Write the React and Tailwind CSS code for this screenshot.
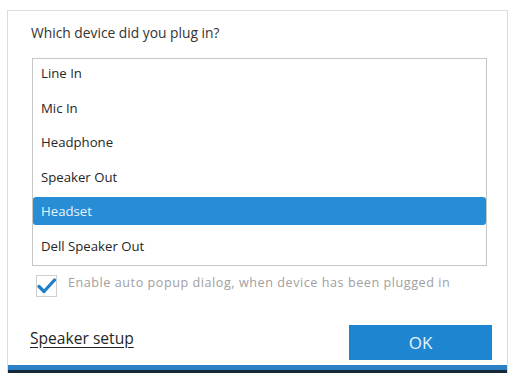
import React from "react";

const items = ["Line In", "Mic In", "Headphone", "Speaker Out", "Headset", "Dell Speaker Out"];

export default function App() {
  const selected = 4;
  return (
    <div
      className="w-[513px] h-[382px] bg-white overflow-hidden pt-[10px] pl-[7px]"
      style={{ fontFamily: '"Open Sans", "Noto Sans", sans-serif' }}
    >
      <div className="w-[501px] h-[363px] flex flex-col border-l border-t border-r border-[#dcdcdc]">
        <div className="flex-1 flex flex-col pl-[23px] pr-[22px]">
          <div className="mt-[12px] h-[20px] leading-[20px] text-[13.8px] text-[#333333]">
            Which device did you plug in?
          </div>
          <div className="mt-[15px] ml-[1px] w-[455px] h-[208px] border-[1.5px] border-[#c6c6c6] flex flex-col gap-[6.6px] pt-0">
            {items.map((it, i) => (
              <div
                key={it}
                className={
                  i === selected
                    ? "h-[28px] leading-[28px] pl-[8px] text-[13.2px] rounded-[3px] bg-[#278ed6] text-[#e8f3fc]"
                    : "h-[28px] leading-[28px] pl-[8px] text-[13.2px] text-[#262626]"
                }
              >
                {it}
              </div>
            ))}
          </div>
          <div className="mt-[9px] ml-[5px] flex items-start gap-[11px]">
            <div className="w-[21px] h-[22px] border-[1.5px] border-[#cfcfcf] bg-white flex items-center justify-center">
              <svg width="19" height="16" viewBox="0 0 19 16">
                <path d="M2 8.5 L7 13.5 L17.5 2" fill="none" stroke="#1f7fc6" strokeWidth="3.2" strokeLinecap="round" strokeLinejoin="round" />
              </svg>
            </div>
            <div className="text-[12.6px] leading-[16px] text-[#a0a0a0] tracking-[0.55px]">
              Enable auto popup dialog, when device has been plugged in
            </div>
          </div>
          <div className="mt-auto mb-[5px] flex items-end justify-between">
            <div className="mb-[12px] text-[15.6px] leading-[20px] text-[#262626] underline underline-offset-[3px] -ml-[1px]">
              Speaker setup
            </div>
            <div className="w-[143px] h-[35px] mr-[-7px] bg-[#1e86d0] flex items-center justify-center text-[17px] text-[#e6f2fb]">
              OK
            </div>
          </div>
        </div>
        <div className="h-[5px] bg-[#2b80c6]" />
        <div className="h-[3px] bg-[#15293b]" />
      </div>
    </div>
  );
}
